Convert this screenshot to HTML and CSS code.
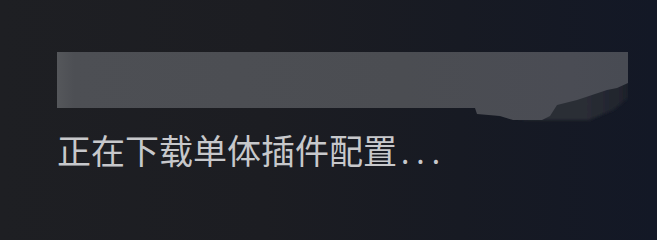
FILE: index.html
```html
<!DOCTYPE html>
<html lang="zh">
<head>
<meta charset="utf-8">
<title>下载</title>
<link rel="stylesheet" href="styles.css">
</head>
<body>
<div class="screen">
  <div class="bar">
    <svg class="bar-art" width="571" height="70" viewBox="0 0 571 70" xmlns="http://www.w3.org/2000/svg">
      <defs>
        <linearGradient id="barFill" x1="0" y1="0" x2="1" y2="0">
          <stop offset="0" stop-color="#55575b"/>
          <stop offset="0.03" stop-color="#4d4f54"/>
          <stop offset="0.6" stop-color="#4b4d52"/>
          <stop offset="0.9" stop-color="#4a4c54"/>
          <stop offset="1" stop-color="#484b53"/>
        </linearGradient>
        <linearGradient id="shadeFill" x1="0" y1="0" x2="1" y2="0">
          <stop offset="0" stop-color="#2c2f36"/>
          <stop offset="0.7" stop-color="#2a2d35"/>
          <stop offset="1" stop-color="#1e222b"/>
        </linearGradient>
        <filter id="soft" x="-10%" y="-10%" width="120%" height="120%">
          <feGaussianBlur stdDeviation="1.6"/>
        </filter>
      </defs>
      <polygon points="430,56 571,28 571,46 556,58 532,68 470,68 440,62" fill="url(#shadeFill)" filter="url(#soft)"/>
      <polygon points="0,0 571,0 571,31 560,36 550,38 520,48 500,53 493,64 485,68 456,68 443,64 420,62 418,56 0,56" fill="url(#barFill)"/>
    </svg>
  </div>
  <div class="status">正在下载单体插件配置<span class="dots">...</span></div>
</div>
</body>
</html>
```
FILE: styles.css
```css
html, body {
  margin: 0;
  padding: 0;
}
body {
  width: 657px;
  height: 208px;
  overflow: hidden;
  background: linear-gradient(90deg, #1e1f23 0%, #1c1d22 40%, #171a23 70%, #131826 100%);
}
.screen {
  display: flex;
  flex-direction: column;
  padding: 52px 0 0 57px;
}
.bar {
  position: relative;
  width: 571px;
  height: 56px;
}
.bar-art {
  position: absolute;
  left: 0;
  top: 0;
  display: block;
}
.status {
  margin-top: 22px;
  color: #c7c8cb;
  font-family: "Noto Sans CJK SC", "Noto Sans", sans-serif;
  font-size: 34px;
  line-height: 40px;
  white-space: nowrap;
}
.dots {
  letter-spacing: 7px;
  font-size: 30px;
  margin-left: 4px;
}
```
